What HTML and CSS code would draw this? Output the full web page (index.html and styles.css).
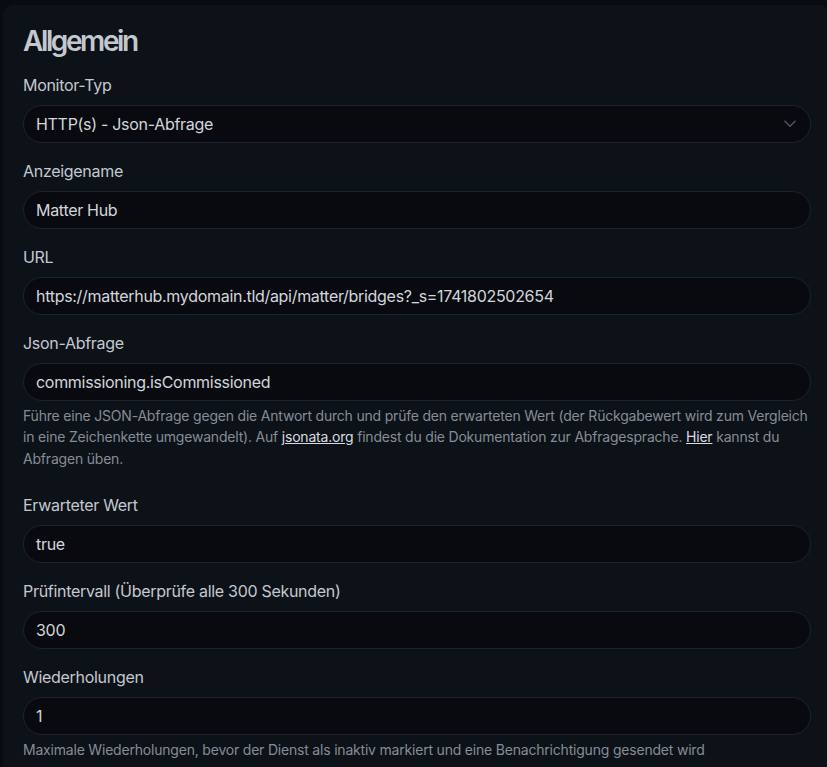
FILE: index.html
```html
<!DOCTYPE html>
<html lang="de">
<head>
<meta charset="utf-8">
<link rel="stylesheet" href="styles.css">
</head>
<body>
<div class="page">
  <div class="card">
    <h2 class="title">Allgemein</h2>

    <div class="field">
      <label class="label">Monitor-Typ</label>
      <div class="control select">
        <span>HTTP(s) - Json-Abfrage</span>
        <svg class="chevron" width="12" height="8" viewBox="0 0 12 8"><polyline points="1,1.2 6,6.2 11,1.2" fill="none" stroke="#4a525d" stroke-width="1.6" stroke-linecap="round" stroke-linejoin="round"/></svg>
      </div>
    </div>

    <div class="field">
      <label class="label">Anzeigename</label>
      <div class="control">Matter Hub</div>
    </div>

    <div class="field">
      <label class="label">URL</label>
      <div class="control">https://matterhub.mydomain.tld/api/matter/bridges?_s=1741802502654</div>
    </div>

    <div class="field field-help">
      <label class="label">Json-Abfrage</label>
      <div class="control">commissioning.isCommissioned</div>
      <div class="help">Führe eine JSON-Abfrage gegen die Antwort durch und prüfe den erwarteten Wert (der Rückgabewert wird zum Vergleich in eine Zeichenkette umgewandelt). Auf <a href="#">jsonata.org</a> findest du die Dokumentation zur Abfragesprache. <a href="#">Hier</a> kannst du Abfragen üben.</div>
    </div>

    <div class="field">
      <label class="label">Erwarteter Wert</label>
      <div class="control">true</div>
    </div>

    <div class="field">
      <label class="label">Prüfintervall (Überprüfe alle 300 Sekunden)</label>
      <div class="control">300</div>
    </div>

    <div class="field">
      <label class="label">Wiederholungen</label>
      <div class="control">1</div>
      <div class="help">Maximale Wiederholungen, bevor der Dienst als inaktiv markiert und eine Benachrichtigung gesendet wird</div>
    </div>
  </div>
</div>
</body>
</html>
```

FILE: styles.css
```css
html, body {
  margin: 0;
  padding: 0;
  background: #080b0f;
  overflow: hidden;
}
body {
  font-family: Inter, "Noto Sans", sans-serif;
  color: #c2c7cd;
  font-size: 16px;
  line-height: 24px;
  letter-spacing: -0.3px;
}
.page {
  padding: 5px 0 0 3px;
  width: 828px;
}
.card {
  background: #0d1118;
  border-radius: 10px;
  padding: 19px 20px 40px 20px;
  width: 788px;
}
.title {
  margin: 0 0 15px 0;
  font-size: 28px;
  line-height: 34px;
  font-weight: 600;
  letter-spacing: -2.4px;
  color: #c3c8ce;
}
.field {
  margin-bottom: 16px;
}
.field-help {
  margin-bottom: 24px;
}
.label {
  display: block;
  margin-bottom: 8px;
  color: #c4c9cf;
}
.control {
  box-sizing: border-box;
  height: 38px;
  border: 1px solid #1b2330;
  border-radius: 19px;
  background: #080a0f;
  padding: 6px 12px;
  color: #d2d6db;
  white-space: nowrap;
  overflow: hidden;
}
.select {
  display: flex;
  align-items: center;
  justify-content: space-between;
  padding-right: 14px;
}
.chevron {
  display: block;
}
.help {
  margin-top: 4px;
  font-size: 14px;
  line-height: 21.3px;
  letter-spacing: -0.2px;
  color: #868d96;
}
.help a {
  color: #d8dce0;
  text-decoration: underline;
}
```
